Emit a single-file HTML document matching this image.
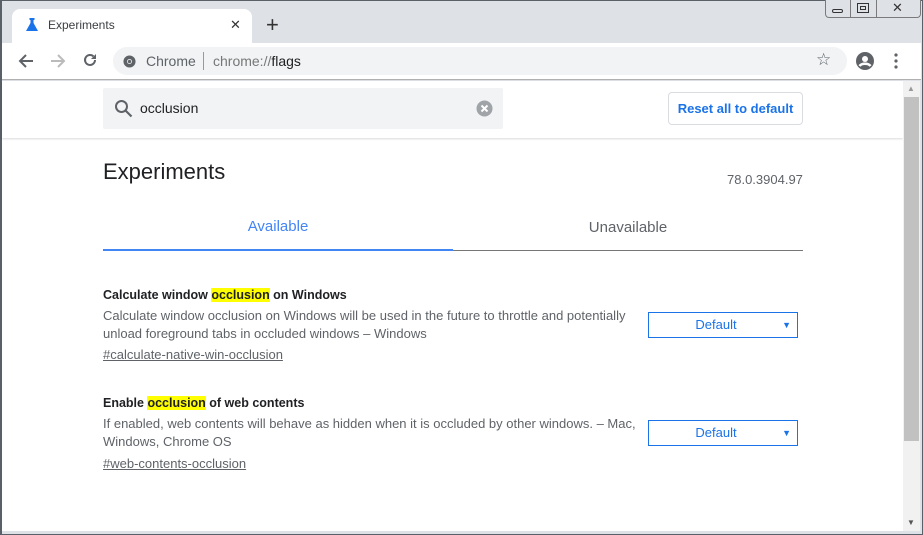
<!DOCTYPE html>
<html><head><meta charset="utf-8"><style>
*{box-sizing:border-box;margin:0;padding:0}
body{width:923px;height:535px;overflow:hidden;font-family:"Liberation Sans",Arial,sans-serif;background:#fff;position:relative}
.abs{position:absolute}
.win{left:0;top:0;width:923px;height:535px;border:1px solid #5a6068;border-left:2px solid #5a6068;background:#dee1e6}
.tab{left:12px;top:9px;width:240px;height:35px;background:#fff;border-radius:8px 8px 0 0}
.toolbar{left:2px;top:43px;width:919px;height:37px;background:#fff;border-bottom:1px solid #b0b0b0}
.omni{left:113px;top:47px;width:734px;height:28px;background:#f1f3f4;border-radius:14px}
.content{left:2px;top:81px;width:901px;height:450px;background:#fff}
.hdr{left:2px;top:81px;width:901px;height:57px;background:#fff;box-shadow:0 1px 2px rgba(0,0,0,.15)}
.search{left:103px;top:88px;width:400px;height:41px;background:#f1f3f4;border-radius:2px}
.btn{left:668px;top:92px;width:135px;height:33px;border:1px solid #dadce0;border-radius:4px;color:#1a73e8;font-size:13px;font-weight:bold;text-align:center;line-height:31px}
.sb{left:903px;top:81px;width:17px;height:450px;background:#f1f1f1}
.thumb{left:904px;top:97px;width:15px;height:344px;background:#c1c1c1}
.t{font-size:12.5px;color:#202124;font-weight:bold}
.d{font-size:13px;color:#5f6368;line-height:18px}
.l{font-size:13px;color:#5f6368;text-decoration:underline}
mark{background:#ff0;color:#202124}
.sel{width:150px;height:26px;border:1px solid #1a73e8;color:#1a73e8;font-size:13px;text-align:center;line-height:24px;left:648px;padding-right:14px}
.sel span{position:absolute;right:6px;top:0;font-size:9px}
</style></head><body>
<div class="abs win"></div>
<div class="abs" style="left:825px;top:0;width:96px;height:18px;border:1px solid #7a7a7a;border-top:none;border-radius:0 0 4px 4px;background:#dee1e6"></div>
<div class="abs" style="left:850px;top:0;width:1px;height:17px;background:#7a7a7a"></div>
<div class="abs" style="left:876px;top:0;width:1px;height:17px;background:#7a7a7a"></div>
<div class="abs" style="left:832px;top:9px;width:11px;height:4px;border:1px solid #333;border-radius:2px"></div>
<div class="abs" style="left:857px;top:3px;width:12px;height:10px;border:1px solid #333"></div>
<div class="abs" style="left:860px;top:6px;width:6px;height:4px;border:1px solid #333"></div>
<div class="abs" style="left:892px;top:0px;font-size:13px;color:#333">✕</div>
<div class="abs tab"></div>
<svg class="abs" style="left:25px;top:18px" width="14" height="14" viewBox="0 0 14 14"><path d="M4.5 0h5v2h-1v3l4.5 8h-12l4.5-8v-3h-1z" fill="#1a73e8"/></svg>
<div class="abs" style="left:48px;top:18px;font-size:12px;color:#3c4043">Experiments</div>
<div class="abs" style="left:230px;top:17px;font-size:13px;color:#333">✕</div>
<div class="abs" style="left:266px;top:12px;font-size:22px;color:#333;font-weight:300">+</div>
<div class="abs toolbar"></div>
<svg class="abs" style="left:17px;top:53px" width="18" height="16" viewBox="0 0 18 16"><path d="M16 8H3M9 2L3 8l6 6" stroke="#5f6368" stroke-width="2" fill="none"/></svg>
<svg class="abs" style="left:49px;top:53px" width="18" height="16" viewBox="0 0 18 16"><path d="M2 8h13M9 2l6 6-6 6" stroke="#bbb" stroke-width="2" fill="none"/></svg>
<svg class="abs" style="left:82px;top:52px" width="16" height="16" viewBox="0 0 16 16"><path d="M13 8a5 5 0 1 1-1.5-3.6" stroke="#5f6368" stroke-width="2" fill="none"/><path d="M14 2v5h-5z" fill="#5f6368"/></svg>
<div class="abs omni"></div>
<svg class="abs" style="left:123px;top:55px" width="13" height="13" viewBox="0 0 14 14"><circle cx="7" cy="7" r="6.5" fill="#5f6368"/><circle cx="7" cy="7" r="2.6" fill="#fff"/><circle cx="7" cy="7" r="1.8" fill="#5f6368"/></svg>
<div class="abs" style="left:146px;top:53px;font-size:14px;color:#5f6368">Chrome</div>
<div class="abs" style="left:203px;top:52px;width:1px;height:18px;background:#999"></div>
<div class="abs" style="left:213px;top:53px;font-size:14px;color:#777">chrome://<span style="color:#202124">flags</span></div>
<div class="abs" style="left:816px;top:50px;font-size:17px;color:#5f6368">☆</div>
<svg class="abs" style="left:856px;top:52px" width="18" height="18" viewBox="0 0 18 18"><circle cx="9" cy="9" r="9" fill="#5f6368"/><circle cx="9" cy="7" r="3" fill="#fff"/><path d="M3.5 14c2-3 9-3 11 0" stroke="#fff" stroke-width="2.5" fill="none"/></svg>
<svg class="abs" style="left:894px;top:53px" width="4" height="16"><circle cx="2" cy="2" r="1.6" fill="#5f6368"/><circle cx="2" cy="8" r="1.6" fill="#5f6368"/><circle cx="2" cy="14" r="1.6" fill="#5f6368"/></svg>
<div class="abs content"></div>
<div class="abs hdr"></div>
<div class="abs search"></div>
<svg class="abs" style="left:114px;top:99px" width="19" height="19" viewBox="0 0 19 19"><circle cx="7.5" cy="7.5" r="5.5" stroke="#5f6368" stroke-width="2" fill="none"/><path d="M11.5 11.5l6 6" stroke="#5f6368" stroke-width="2.2"/></svg>
<div class="abs" style="left:140px;top:100px;font-size:14px;color:#202124">occlusion</div>
<svg class="abs" style="left:476px;top:100px" width="17" height="17" viewBox="0 0 17 17"><circle cx="8.5" cy="8.5" r="8" fill="#a0a3a7"/><path d="M5.5 5.5l6 6M11.5 5.5l-6 6" stroke="#fff" stroke-width="2"/></svg>
<div class="abs btn">Reset all to default</div>
<div class="abs" style="left:103px;top:159px;font-size:22px;color:#202124">Experiments</div>
<div class="abs" style="left:727px;top:172px;font-size:13px;color:#5f6368">78.0.3904.97</div>
<div class="abs" style="left:103px;top:218px;width:350px;text-align:center;font-size:15px;color:#4285f4">Available</div>
<div class="abs" style="left:453px;top:219px;width:350px;text-align:center;font-size:15px;color:#5f6368">Unavailable</div>
<div class="abs" style="left:103px;top:249px;width:350px;height:2px;background:#4285f4"></div>
<div class="abs" style="left:453px;top:250px;width:350px;height:1px;background:#777"></div>
<div class="abs t" style="left:103px;top:288px">Calculate window <mark>occlusion</mark> on Windows</div>
<div class="abs d" style="left:103px;top:307px;width:540px">Calculate window occlusion on Windows will be used in the future to throttle and potentially unload foreground tabs in occluded windows – Windows</div>
<div class="abs l" style="left:103px;top:347px">#calculate-native-win-occlusion</div>
<div class="abs sel" style="top:312px">Default<span>▼</span></div>
<div class="abs t" style="left:103px;top:396px">Enable <mark>occlusion</mark> of web contents</div>
<div class="abs d" style="left:103px;top:415px;width:540px">If enabled, web contents will behave as hidden when it is occluded by other windows. – Mac, Windows, Chrome OS</div>
<div class="abs l" style="left:103px;top:456px">#web-contents-occlusion</div>
<div class="abs sel" style="top:420px">Default<span>▼</span></div>
<div class="abs sb"></div>
<div class="abs thumb"></div>
<div class="abs" style="left:907px;top:84px;font-size:8px;color:#999">▲</div>
<div class="abs" style="left:907px;top:518px;font-size:8px;color:#555">▼</div>
<div class="abs" style="left:2px;top:531px;width:919px;height:3px;background:#dee1e6"></div>
</body></html>
